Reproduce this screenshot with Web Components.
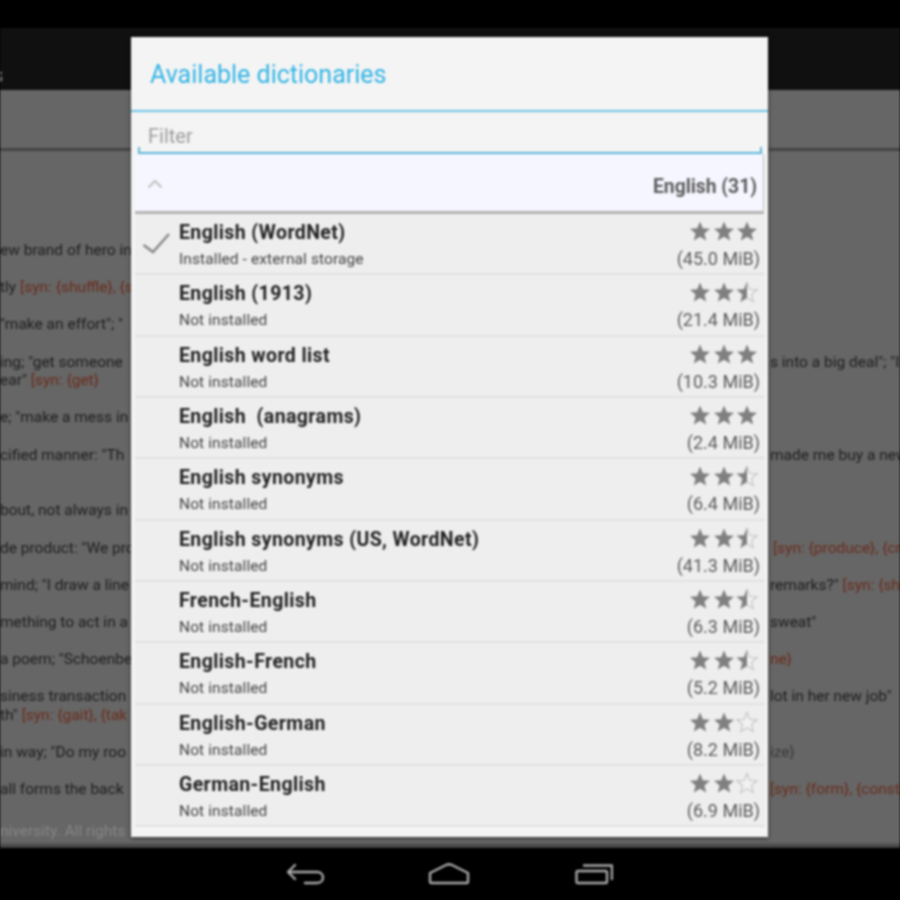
<!DOCTYPE html>
<html>
<head>
<meta charset="utf-8">
<title>Available dictionaries</title>
<style>
  html, body { margin: 0; padding: 0; background: #000; }
</style>
</head>
<body>

<dict-app>
  <bg-page>
    <bg-line gap="0" left='ew brand of hero in'></bg-line>
    <bg-line gap="1" left='tly' red-left='[syn: {shuffle}, {s'></bg-line>
    <bg-line gap="1" left=' "make an effort"; "'></bg-line>
    <bg-line gap="1" left='ing; "get someone' right='s into a big deal"; "I'></bg-line>
    <bg-line gap="0" left='ear"' red-left='[syn: {get}'></bg-line>
    <bg-line gap="1" left='e; "make a mess in'></bg-line>
    <bg-line gap="1" left='cified manner: "Th' right='made me buy a new'></bg-line>
    <bg-line gap="2" left='bout, not always in'></bg-line>
    <bg-line gap="1" left='de product: "We pro' red-right='[syn: {produce}, {cr' rpad="3"></bg-line>
    <bg-line gap="1" left='mind; "I draw a line' right='remarks?"' red-right='[syn: {sh'></bg-line>
    <bg-line gap="1" left='mething to act in a' right='sweat"'></bg-line>
    <bg-line gap="1" left='a poem; "Schoenbe' red-right='ne}'></bg-line>
    <bg-line gap="1" left='siness transaction' right='lot in her new job"'></bg-line>
    <bg-line gap="0" left='th"' red-left='[syn: {gait}, {tak'></bg-line>
    <bg-line gap="1" left='in way; "Do my roo' soft-right='ize}'></bg-line>
    <bg-line gap="1" left='all forms the back' red-right='[syn: {form}, {const'></bg-line>
    <bg-line gap="1.25" left='niversity. All rights' faint></bg-line>
  </bg-page>

  <dict-dialog slot="dialog">
    <span slot="title">Available dictionaries</span>
    <span slot="section">English (31)</span>

    <dict-row stars="3" checked><span slot="name">English (WordNet)</span><span slot="sub">Installed - external storage</span><span slot="size">(45.0 MiB)</span></dict-row>
    <dict-row stars="2.5"><span slot="name">English (1913)</span><span slot="sub">Not installed</span><span slot="size">(21.4 MiB)</span></dict-row>
    <dict-row stars="3"><span slot="name">English word list</span><span slot="sub">Not installed</span><span slot="size">(10.3 MiB)</span></dict-row>
    <dict-row stars="3"><span slot="name">English&nbsp; (anagrams)</span><span slot="sub">Not installed</span><span slot="size">(2.4 MiB)</span></dict-row>
    <dict-row stars="2.5"><span slot="name">English synonyms</span><span slot="sub">Not installed</span><span slot="size">(6.4 MiB)</span></dict-row>
    <dict-row stars="2.5"><span slot="name">English synonyms (US, WordNet)</span><span slot="sub">Not installed</span><span slot="size">(41.3 MiB)</span></dict-row>
    <dict-row stars="2.5"><span slot="name">French-English</span><span slot="sub">Not installed</span><span slot="size">(6.3 MiB)</span></dict-row>
    <dict-row stars="2.5"><span slot="name">English-French</span><span slot="sub">Not installed</span><span slot="size">(5.2 MiB)</span></dict-row>
    <dict-row stars="2"><span slot="name">English-German</span><span slot="sub">Not installed</span><span slot="size">(8.2 MiB)</span></dict-row>
    <dict-row stars="2"><span slot="name">German-English</span><span slot="sub">Not installed</span><span slot="size">(6.9 MiB)</span></dict-row>
  </dict-dialog>
</dict-app>

<script>
// Pagina completa: barras del sistema y fondo atenuado, el dialogo va encima
class DictApp extends HTMLElement {
  constructor() {
    super();
    this.attachShadow({ mode: 'open' });
    this.shadowRoot.innerHTML = `
      <style>
        :host { display: flex; flex-direction: column; position: relative; width: 900px; height: 900px; overflow: hidden; background: #000; font-family: Roboto, sans-serif; filter: blur(0.8px); }
        .status { height: 28px; background: #000; flex: none; }
        .action { height: 62px; background: #101010; flex: none; overflow: hidden; color: #8a8a8a; font-size: 20px; line-height: 94px; }
        .action span { margin-left: -7px; display: inline-block; }
        .tabs { height: 58px; background: #666; flex: none; border-bottom: 3px solid #454545; }
        .content { flex: 1; background: #666; min-height: 0; overflow: hidden; }
        .edge { height: 5px; flex: none; background: linear-gradient(#5a5a5a, #3c3c3c); }
        nav { height: 52px; flex: none; background: #000; display: flex; align-items: flex-start; }
        nav svg { display: block; fill: none; stroke: #a8a8a8; stroke-width: 2.400; stroke-linecap: round; stroke-linejoin: round; }
        .back { margin: 15px 0 0 287px; }
        .home { margin: 14px 0 0 103px; }
        .recent { margin: 15px 0 0 105px; }
      </style>
      <div class="status"></div>
      <div class="action"><span>s</span></div>
      <div class="tabs"></div>
      <div class="content"><slot></slot></div>
      <div class="edge"></div>
      <nav>
        <svg class="back" width="38" height="24" viewBox="0 0 38 24"><path d="M8 2 1 9 8 16M2 9H30C38 9 38 20 30 20H18"/></svg>
        <svg class="home" width="42" height="24" viewBox="0 0 42 24"><path d="M2 11 18 3Q21 1.500 24 3L40 11V19.500Q40 21 38.500 21H3.500Q2 21 2 19.500Z"/></svg>
        <svg class="recent" width="38" height="24" viewBox="0 0 38 24"><path d="M1.500 9.500Q1.500 8 3 8H30.500Q32 8 32 9.500V18.500Q32 20 30.500 20H3Q1.500 20 1.500 18.500Z"/><path d="M9 2.500H37V16"/></svg>
      </nav>
      <slot name="dialog"></slot>`;
  }
}

// Contenedor de las lineas de texto que asoman detras del dialogo
class BgPage extends HTMLElement {
  constructor() {
    super();
    this.attachShadow({ mode: 'open' });
    this.shadowRoot.innerHTML = `
      <style>
        :host { display: block; padding-top: 90px; font-size: 15.500px; line-height: 18.600px; color: #1e1e1e; }
      </style>
      <slot></slot>`;
  }
}

class BgLine extends HTMLElement {
  constructor() {
    super();
    this.attachShadow({ mode: 'open' });
    const a = (n) => this.getAttribute(n) || '';
    const red = (t) => t ? `<span class="red">${t}</span>` : '';
    const soft = (t) => t ? `<span class="soft">${t}</span>` : '';
    this.shadowRoot.innerHTML = `
      <style>
        :host { display: flex; height: 18.600px; white-space: nowrap; }
        .l { width: 131px; overflow: hidden; flex: none; }
        .r { margin-left: 637px; flex: 1; min-width: 0; overflow: hidden; }
        .red { color: #6a2c1c; }
        .soft { color: #3a3a3a; }
        :host([faint]) { color: #868686; }
      </style>
      <div class="l">${a('left')} ${red(a('red-left'))}</div>
      <div class="r" style="padding-left:${2 + Number(a('rpad'))}px">${a('right')} ${red(a('red-right'))}${soft(a('soft-right'))}</div>`;
    // gap = filas en blanco antes de esta linea
    this.style.marginTop = Number(a('gap')) * 18.6 + 'px';
  }
}

const STAR = 'M12 2.500 14.800 9.300 22 9.800 16.400 14.500 18.200 21.500 12 17.700 5.800 21.500 7.600 14.500 2 9.800 9.200 9.300Z';

// Estrella llena, media o vacia segun el atributo fill
class RateStar extends HTMLElement {
  constructor() {
    super();
    this.attachShadow({ mode: 'open' });
    const fill = Number(this.getAttribute('fill'));
    const outline = `<path d="${STAR}" fill="#f2f2f2" stroke="#c9c9c9" stroke-width="1.300"/>`;
    const full = `<path d="${STAR}" fill="#808080"/>`;
    let inner = full;
    if (fill === 0) inner = outline;
    if (fill === 0.5) {
      inner = `${outline}<clipPath id="half"><rect width="12" height="24"/></clipPath><g clip-path="url(#half)">${full}</g>`;
    }
    this.shadowRoot.innerHTML = `
      <style>
        :host { display: block; width: 24px; height: 24px; }
        svg { display: block; }
      </style>
      <svg width="24" height="24" viewBox="0 0 24 24">${inner}</svg>`;
  }
}

class StarRating extends HTMLElement {
  constructor() {
    super();
    this.attachShadow({ mode: 'open' });
    const value = Number(this.getAttribute('value'));
    let stars = '';
    for (let i = 0; i < 3; i++) {
      const f = Math.max(0, Math.min(1, value - i));
      stars += `<rate-star fill="${f}"></rate-star>`;
    }
    this.shadowRoot.innerHTML = `
      <style>
        :host { display: flex; }
        rate-star { margin-left: -0.500px; }
      </style>
      ${stars}`;
  }
}

class DictRow extends HTMLElement {
  constructor() {
    super();
    this.attachShadow({ mode: 'open' });
    const check = this.hasAttribute('checked')
      ? `<svg width="28" height="22" viewBox="0 0 28 22"><path d="M1.500 13 11 20 27 2" fill="none" stroke="#8a8a8a" stroke-width="2.600"/></svg>`
      : '';
    this.shadowRoot.innerHTML = `
      <style>
        :host { display: grid; grid-template-columns: 44px 1fr auto; height: 61.330px; box-sizing: border-box; border-bottom: 2px solid #e2e2e2; background: #eeeeee; padding-right: 5px; }
        .check { padding: 18px 0 0 7px; }
        .check svg { display: block; }
        .text { display: flex; flex-direction: column; min-width: 0; }
        .name { font-size: 19.500px; letter-spacing: .4px; font-weight: 700; color: #222; line-height: 24px; margin-top: 7px; white-space: nowrap; }
        .sub { font-size: 15.500px; letter-spacing: .1px; color: #444; line-height: 18px; margin-top: 5px; white-space: nowrap; }
        .side { display: flex; flex-direction: column; align-items: flex-end; }
        star-rating { margin: 5px 1px 0 0; }
        .size { font-size: 18px; color: #5c5c5c; line-height: 20px; margin-top: 6px; white-space: nowrap; }
      </style>
      <div class="check">${check}</div>
      <div class="text">
        <div class="name"><slot name="name"></slot></div>
        <div class="sub"><slot name="sub"></slot></div>
      </div>
      <div class="side">
        <star-rating value="${this.getAttribute('stars')}"></star-rating>
        <div class="size"><slot name="size"></slot></div>
      </div>`;
  }
}

class DictDialog extends HTMLElement {
  constructor() {
    super();
    this.attachShadow({ mode: 'open' });
    this.shadowRoot.innerHTML = `
      <style>
        :host { display: flex; flex-direction: column; position: absolute; left: 131px; top: 37px; width: 637px; height: 800px; background: #f4f4f4; box-shadow: 0 1px 4px rgba(0,0,0,.6); overflow: hidden; }
        .title { height: 73px; flex: none; box-sizing: border-box; padding: 21px 0 0 19px; font-size: 25px; line-height: 34px; color: #33b5e5; }
        .rule { height: 2px; background: #6cc4e8; flex: none; }
        .filter { height: 42px; flex: none; box-sizing: border-box; margin: 0 6px 0 7px; padding: 11px 0 0 10px; font-size: 20px; line-height: 26px; color: #9c9c9c; border-bottom: 2px solid #5cb6da; position: relative; }
        .filter::before, .filter::after { content: ""; position: absolute; bottom: 0; width: 2px; height: 5px; background: #5cb6da; }
        .filter::before { left: 0; }
        .filter::after { right: 0; }
        .section { height: 60px; flex: none; box-sizing: border-box; margin: 0 4px; padding: 0 6px 0 12px; background: #f5f6ff; border-bottom: 3px solid #b4b4b4; border-right: 1px solid #bdbdbd; display: flex; align-items: center; justify-content: space-between; font-size: 19.300px; font-weight: 700; color: #5c5c5c; }
        .section svg { display: block; fill: none; stroke: #c2c2c2; stroke-width: 2; margin-top: 2px; }
        .section span { margin-top: 8px; }
        .list { margin-left: 4px; margin-right: 3px; flex: 1; min-height: 0; }
      </style>
      <div class="title"><slot name="title"></slot></div>
      <div class="rule"></div>
      <div class="filter">Filter</div>
      <div class="section">
        <svg width="16" height="10" viewBox="0 0 16 10"><path d="M1.500 8.500 8 2 14.500 8.500"/></svg>
        <span><slot name="section"></slot></span>
      </div>
      <div class="list"><slot></slot></div>`;
  }
}

customElements.define('rate-star', RateStar);
customElements.define('star-rating', StarRating);
customElements.define('dict-row', DictRow);
customElements.define('dict-dialog', DictDialog);
customElements.define('bg-line', BgLine);
customElements.define('bg-page', BgPage);
customElements.define('dict-app', DictApp);
</script>
</body>
</html>
